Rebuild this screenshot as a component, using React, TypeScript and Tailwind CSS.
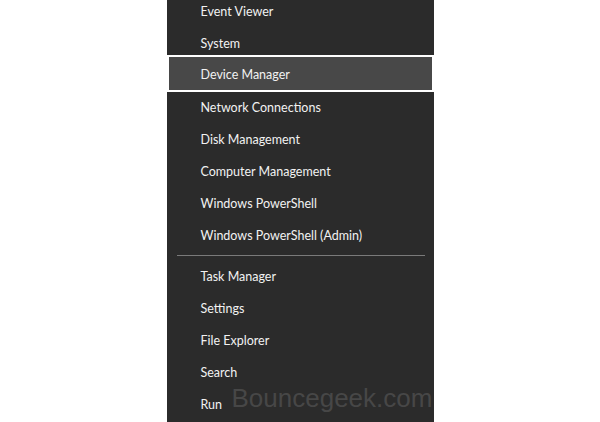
import React from "react";

const topItems = [
  "Event Viewer",
  "System",
  "Device Manager",
  "Network Connections",
  "Disk Management",
  "Computer Management",
  "Windows PowerShell",
  "Windows PowerShell (Admin)",
];

const bottomItems = ["Task Manager", "Settings", "File Explorer", "Search", "Run"];

const MenuRow = ({ label, active }: { label: string; active?: boolean }) => {
  if (active) {
    return (
      <div className="flex items-center h-[37px] -mt-[4px] -mb-[1px] border-2 border-white bg-[#484848] pl-[32px] pt-[4px]">
        <span>{label}</span>
      </div>
    );
  }
  return (
    <div className="flex items-center h-8 pl-[34px] pt-[2px]">
      <span>{label}</span>
    </div>
  );
};

export default function App() {
  return (
    <div className="w-[600px] h-[422px] bg-white overflow-hidden">
      <div
        className="relative mx-auto w-[267px] h-[422px] bg-[#2b2b2b] text-[#f2f2f2] text-[12.5px] overflow-hidden"
        style={{ fontFamily: 'Lato, "Noto Sans", sans-serif' }}
      >
        <div className="flex flex-col -mt-[5px]">
          {topItems.map((item) => (
            <MenuRow key={item} label={item} active={item === "Device Manager"} />
          ))}
          <div className="h-px bg-[#7a7a7a] ml-[10px] mr-[9px] my-1" />
          {bottomItems.map((item) => (
            <MenuRow key={item} label={item} />
          ))}
        </div>
        <div
          className="absolute left-[65px] top-[385px] text-[26px] leading-[26px] text-[#474747] whitespace-nowrap"
          style={{ fontFamily: '"Liberation Sans", Arial, sans-serif' }}
        >
          Bouncegeek.com
        </div>
      </div>
    </div>
  );
}
